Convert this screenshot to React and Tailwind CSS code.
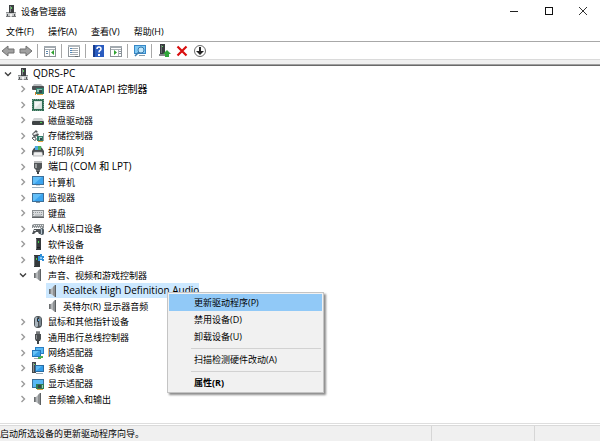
// src/App.jsx
import React, { useState } from 'react';

const Svg = ({ w = 14, h = 14, children }) => (
  <svg width={w} height={h} viewBox={`0 0 ${w} ${h}`} className="block shrink-0" aria-hidden="true">
    {children}
  </svg>
);

/* ---------- Device icons ---------- */

const PcIcon = () => (
  <Svg>
    <rect x="5" y="1" width="5" height="8" fill="#3d4042" />
    <rect x="6" y="2" width="1" height="6" fill="#85898b" />
    <rect x="7" y="3" width="1" height="2" fill="#5fd35f" />
    <path d="M2 8h3v1h5V8h2v5H2z" fill="#c9cbcc" />
    <rect x="2" y="8" width="3" height="1" fill="#8b8e90" />
    <rect x="10" y="8" width="2" height="1" fill="#8b8e90" />
    <rect x="2" y="12" width="4" height="1" fill="#77797b" />
    <rect x="8" y="12" width="4" height="1" fill="#77797b" />
    <rect x="3" y="10" width="1" height="2" fill="#55585a" />
    <rect x="10" y="10" width="1" height="2" fill="#55585a" />
    <rect x="6" y="10" width="2" height="2" fill="#f4f4f4" />
  </Svg>
);

const IdeIcon = () => (
  <Svg>
    <path d="M1 5l2-3h7l3 3z" fill="#b9bdbf" />
    <rect x="1" y="4" width="12" height="4" rx="1" fill="#4c5153" />
    <path d="M5 6h8v6H5z" fill="#2f7d6a" />
    <rect x="6" y="7" width="5" height="3" fill="#8fc2b3" />
    <rect x="8" y="8" width="3" height="3" fill="#33474a" />
    <path d="M6 12h6v1H6z" fill="#e0a443" />
    <rect x="4" y="10" width="1" height="3" fill="#d58a2a" />
  </Svg>
);

const CpuIcon = () => (
  <Svg>
    <rect x="1" y="1" width="12" height="12" fill="#2f6b52" />
    <path d="M2 1.500h10M2 12.500h10M1.500 2v10M12.500 2v10" stroke="#6d9c86" strokeDasharray="1 1" />
    <rect x="3" y="3" width="8" height="8" fill="#d6e2dc" />
    <rect x="4" y="4" width="6" height="6" fill="#f4f6f5" />
    <path d="M10 4v6H4z" fill="#dde3e0" />
  </Svg>
);

const DiskIcon = () => (
  <Svg>
    <path d="M3 5h8l2 3H1z" fill="#d0d3d4" />
    <rect x="1" y="8" width="12" height="4" rx="1" fill="#3f4345" />
    <rect x="9" y="9" width="2" height="1" fill="#49d14f" />
  </Svg>
);

const StorageIcon = () => (
  <Svg>
    <path d="M1 5l4-4 2 2-2 1 3 1-1 2-4 1z" fill="#55595b" />
    <path d="M2 5l3-2 1 2-3 1z" fill="#f2f2f2" />
    <path d="M1 9q2-2 4 0v2q-2 1-3-1z" fill="none" stroke="#505456" />
    <path d="M6 7h7v5H6z" fill="#2f7d6a" />
    <rect x="8" y="8" width="3" height="3" fill="#a8cfc4" />
    <rect x="9" y="9" width="2" height="2" fill="#33474a" />
    <path d="M7 12h5v1H7z" fill="#e0a443" />
    <rect x="12" y="4" width="1" height="8" fill="#9a9d9f" />
  </Svg>
);

const PrinterIcon = () => (
  <Svg>
    <path d="M4 2h6l1 4H3z" fill="#4aa8e0" />
    <path d="M7 2h3l1 4H7z" fill="#4fae5b" />
    <path d="M3 4h1v2h6V4h1l2 3v4h-2V8H3v3H1V7z" fill="#4a4e50" />
    <path d="M3 8h8l1 4H2z" fill="#f0f0f0" stroke="#8f9293" strokeWidth="0.6" />
  </Svg>
);

const PortIcon = () => (
  <Svg>
    <path d="M4 1v3M6 1v3M8 1v3M10 1v3" stroke="#77797a" />
    <path d="M3 3h8v5l-2 2H5L3 8z" fill="#525658" />
    <path d="M4 4h2v4H4z" fill="#96999a" />
    <path d="M5 10h4v2H5z" fill="#6f7375" />
    <path d="M7 11v3" stroke="#3f4345" strokeWidth="2" />
  </Svg>
);

const MonitorIcon = () => (
  <Svg>
    <rect x="1" y="2" width="12" height="9" fill="#3c6f99" />
    <rect x="2" y="3" width="10" height="7" fill="#63bff8" />
    <path d="M3 10l8-7h1v7z" fill="#3ba4ef" />
    <path d="M5 11h4v1H5z" fill="#8b979f" />
  </Svg>
);

const ComputerIcon = () => (
  <Svg>
    <rect x="1" y="1" width="12" height="9" fill="#3c6f99" />
    <rect x="2" y="2" width="10" height="7" fill="#63bff8" />
    <path d="M3 9l8-7h1v7z" fill="#3ba4ef" />
    <rect x="5" y="10" width="4" height="1" fill="#c8d4dc" />
    <rect x="1" y="12" width="12" height="1" fill="#9db1bf" />
  </Svg>
);

const KeyboardIcon = () => (
  <Svg>
    <rect x="1" y="4" width="12" height="7" fill="#8b8f92" />
    <rect x="2" y="5" width="10" height="5" fill="#d9dcde" />
    <path d="M2 6.500h10M2 8.500h2M10 8.500h2" stroke="#95999c" strokeDasharray="1 1" />
    <path d="M4 9h6" stroke="#a9adb0" />
    <rect x="1" y="11" width="12" height="1" fill="#606467" />
  </Svg>
);

const HidIcon = () => (
  <Svg>
    <path d="M1 3l2-1h10v4H1z" fill="#8f9497" />
    <path d="M3 3.500h9M2 5.500h9" stroke="#e9ebec" strokeDasharray="1 1" />
    <path d="M3 7h6l1 5H8L7 10H5l-2 2H1z" fill="#4e5356" />
    <path d="M3 8h2v1H3z" fill="#dfe2e4" />
    <rect x="9" y="6" width="4" height="7" rx="2" fill="#4e5b64" />
    <rect x="10" y="7" width="1" height="5" fill="#b5c4ce" />
  </Svg>
);

const SoftDeviceIcon = () => (
  <Svg>
    <rect x="5" y="1" width="5" height="12" fill="#35393b" />
    <rect x="5" y="2" width="1" height="10" fill="#6b7072" />
    <rect x="7" y="4" width="1" height="2" fill="#45d34c" />
    <rect x="6" y="10" width="3" height="1" fill="#1d1f20" />
  </Svg>
);

const SoftComponentIcon = () => (
  <Svg>
    <rect x="3" y="2" width="6" height="12" fill="#35393b" />
    <rect x="3" y="3" width="1" height="10" fill="#6b7072" />
    <rect x="5" y="5" width="1" height="2" fill="#45d34c" />
    <path d="M7 3h2V1h2v2h2v2h-1v1h1v2h-2V7H9v1H7z" fill="#2f8fd8" />
    <rect x="9" y="4" width="2" height="2" fill="#8ccbf5" />
  </Svg>
);

const SpeakerIcon = () => (
  <Svg>
    <path d="M3 5h2v5H3z" fill="#8a8d8f" />
    <path d="M5 5l4-4v12l-4-3z" fill="#b4b7b9" />
    <path d="M7 3l2-2v12l-2-2z" fill="#8e9193" />
    <path d="M9 1h1v12H9z" fill="#5c6062" />
    <path d="M3 5h1v5H3z" fill="#6b6e70" />
  </Svg>
);

const MouseIcon = () => (
  <Svg>
    <rect x="3" y="1" width="8" height="12" rx="4" fill="#4a5054" />
    <rect x="4" y="2" width="3" height="10" rx="1.500" fill="#a8b4bd" />
    <rect x="8" y="2" width="2" height="9" rx="1" fill="#7a8790" />
    <rect x="6" y="3" width="2" height="4" rx="1" fill="#22272b" />
    <rect x="7" y="4" width="1" height="2" fill="#4da3e0" />
  </Svg>
);

const UsbIcon = () => (
  <Svg>
    <rect x="5" y="1" width="4" height="4" fill="#9b9ea0" />
    <path d="M6 2v2M8 2v2" stroke="#3f4345" strokeWidth="0.8" />
    <path d="M4 4h6v5l-1 2H5L4 9z" fill="#4b4f51" />
    <rect x="5" y="5" width="1" height="4" fill="#8b8e90" />
    <path d="M7 10v4" stroke="#3f4345" strokeWidth="2" />
  </Svg>
);

const NetworkIcon = () => (
  <Svg>
    <rect x="4" y="1" width="9" height="7" fill="#2b7fc4" />
    <rect x="5" y="2" width="7" height="5" fill="#58b8f4" />
    <rect x="1" y="4" width="9" height="7" fill="#2577ba" />
    <rect x="2" y="5" width="7" height="5" fill="#66c3f7" />
    <path d="M2 10l6-5h1v5z" fill="#379fe6" />
    <path d="M3 12h5v1H3z" fill="#9fabb2" />
    <path d="M9 10h3v2h-2v1H7v-2h2z" fill="#4caf50" />
  </Svg>
);

const SystemIcon = () => (
  <Svg>
    <rect x="1" y="1" width="4" height="11" fill="#44494c" />
    <rect x="2" y="2" width="1" height="9" fill="#8d9194" />
    <rect x="3" y="3" width="1" height="1" fill="#5fe065" />
    <rect x="4" y="4" width="9" height="7" fill="#2b6ba0" />
    <rect x="5" y="5" width="7" height="5" fill="#5cbaf5" />
    <path d="M5 10l6-5h1v5z" fill="#329dea" />
    <rect x="5" y="12" width="7" height="1" fill="#97a6b0" />
  </Svg>
);

const DisplayIcon = () => (
  <Svg>
    <rect x="1" y="2" width="12" height="9" fill="#3c6f99" />
    <rect x="2" y="3" width="10" height="7" fill="#58b8f4" />
    <rect x="5" y="7" width="8" height="5" fill="#2f7d55" />
    <rect x="7" y="8" width="3" height="3" fill="#3b4447" />
    <rect x="11" y="8" width="1" height="3" fill="#9ad0b4" />
    <path d="M6 12h6v1H6z" fill="#e0a443" />
  </Svg>
);

/* ---------- Toolbar icons ---------- */

const ArrowIcon = ({ flip }) => (
  <Svg>
    <path
      d="M1 7l6-5v3h6v4H7v3z"
      fill="#a0a0a0"
      stroke="#707070"
      transform={flip ? 'rotate(180 7 7)' : undefined}
    />
  </Svg>
);

const TreePanelIcon = () => (
  <Svg>
    <rect x="1.500" y="2.500" width="11" height="10" fill="#fff" stroke="#8b9197" />
    <rect x="1" y="2" width="12" height="2" fill="#a3aab0" />
    <path d="M2 5.500h10M6.500 6v6" stroke="#a9b0b6" />
    <path d="M3 7.500h2M3 9.500h2" stroke="#5e87ad" />
    <path d="M11 6v5L8 8.500z" fill="#2fa12f" />
  </Svg>
);

const PropertiesIcon = () => (
  <Svg>
    <rect x="1.500" y="1.500" width="11" height="11" fill="#fff" stroke="#8f959a" />
    <rect x="1" y="1" width="12" height="2" fill="#b3b8bc" />
    <path d="M3 4.500h8M3 6.500h8M3 8.500h8M3 10.500h8" stroke="#a5abb0" />
    <path d="M3 4.500h2M3 6.500h2M3 8.500h2" stroke="#4e86ba" />
    <path d="M8 12.500h3" stroke="#5f666b" />
  </Svg>
);

const HelpIcon = () => (
  <Svg>
    <rect x="2" y="1" width="11" height="12" fill="#2a5cc0" />
    <rect x="2" y="1" width="2" height="12" fill="#173c8e" />
    <path d="M6 5q0-2 2-2t2 2q0 1-1 1.500T8 8.500" fill="none" stroke="#fff" strokeWidth="1.500" />
    <rect x="7" y="10" width="2" height="2" fill="#fff" />
  </Svg>
);

const ActionPanelIcon = () => (
  <Svg>
    <rect x="1.500" y="2.500" width="11" height="10" fill="#fff" stroke="#8b9197" />
    <rect x="1" y="2" width="12" height="2" fill="#a3aab0" />
    <path d="M2 5.500h10M9.500 6v6" stroke="#a9b0b6" />
    <path d="M10 7.500h2M10 9.500h2" stroke="#85929c" />
    <path d="M5 6v5l3-2.500z" fill="#2fa12f" />
  </Svg>
);

const ScanIcon = () => (
  <Svg>
    <rect x="1" y="1" width="12" height="9" fill="#3787c6" />
    <rect x="2" y="2" width="10" height="7" fill="#7fc8f4" />
    <path d="M6 11h6v1H6z" fill="#8b9ba6" />
    <circle cx="8" cy="6" r="3" fill="#c2e7fb" stroke="#3b7cae" />
    <path d="M6 8l-4 4" stroke="#3f7eae" strokeWidth="1.600" />
  </Svg>
);

const UpdateIcon = () => (
  <Svg>
    <rect x="3" y="0" width="5" height="10" fill="#3a3e40" />
    <rect x="4" y="1" width="1" height="8" fill="#6b7072" />
    <rect x="5" y="2" width="1" height="1" fill="#5fe065" />
    <path d="M2 10h7v2H2z" fill="#85898b" />
    <path d="M10 6l4 4h-2v3H8v-3H6z" fill="#31a63a" />
  </Svg>
);

const UninstallIcon = () => (
  <Svg>
    <path d="M2.500 2.500l9 9M11.500 2.500l-9 9" stroke="#d90f0f" strokeWidth="2.200" />
  </Svg>
);

const DisableIcon = () => (
  <Svg>
    <circle cx="7" cy="7" r="5.500" fill="#fff" stroke="#6b6b6b" />
    <path d="M6 3h2v4h3l-4 4-4-4h3z" fill="#222" />
  </Svg>
);

const Chevron = ({ open }) => (
  <Svg w={8} h={8}>
    {open ? (
      <path d="M1 2.500l3 3 3-3" fill="none" stroke="#404040" strokeWidth="1.400" />
    ) : (
      <path d="M2.500 1l3 3-3 3" fill="none" stroke="#9a9a9a" strokeWidth="1.400" />
    )}
  </Svg>
);

/* ---------- Data ---------- */

const menus = ['文件(F)', '操作(A)', '查看(V)', '帮助(H)'];

const toolbar = [
  [
    { label: '后退', icon: <ArrowIcon /> },
    { label: '前进', icon: <ArrowIcon flip /> },
  ],
  [{ label: '显示/隐藏控制台树', icon: <TreePanelIcon /> }],
  [{ label: '属性', icon: <PropertiesIcon /> }],
  [
    { label: '帮助', icon: <HelpIcon /> },
    { label: '显示/隐藏操作窗格', icon: <ActionPanelIcon /> },
  ],
  [{ label: '扫描检测硬件改动', icon: <ScanIcon /> }],
  [
    { label: '更新驱动程序', icon: <UpdateIcon /> },
    { label: '卸载设备', icon: <UninstallIcon /> },
    { label: '禁用设备', icon: <DisableIcon /> },
  ],
];

// latin: names that are mostly Latin letters are set one size up
const devices = [
  { name: 'QDRS-PC', level: 0, icon: PcIcon, open: true, latin: true },
  { name: 'IDE ATA/ATAPI 控制器', level: 1, icon: IdeIcon, latin: true },
  { name: '处理器', level: 1, icon: CpuIcon },
  { name: '磁盘驱动器', level: 1, icon: DiskIcon },
  { name: '存储控制器', level: 1, icon: StorageIcon },
  { name: '打印队列', level: 1, icon: PrinterIcon },
  { name: '端口 (COM 和 LPT)', level: 1, icon: PortIcon, latin: true },
  { name: '计算机', level: 1, icon: ComputerIcon },
  { name: '监视器', level: 1, icon: MonitorIcon },
  { name: '键盘', level: 1, icon: KeyboardIcon },
  { name: '人机接口设备', level: 1, icon: HidIcon },
  { name: '软件设备', level: 1, icon: SoftDeviceIcon },
  { name: '软件组件', level: 1, icon: SoftComponentIcon },
  { name: '声音、视频和游戏控制器', level: 1, icon: SpeakerIcon, open: true },
  { name: 'Realtek High Definition Audio', level: 2, icon: SpeakerIcon, latin: true },
  { name: '英特尔(R) 显示器音频', level: 2, icon: SpeakerIcon },
  { name: '鼠标和其他指针设备', level: 1, icon: MouseIcon },
  { name: '通用串行总线控制器', level: 1, icon: UsbIcon },
  { name: '网络适配器', level: 1, icon: NetworkIcon },
  { name: '系统设备', level: 1, icon: SystemIcon },
  { name: '显示适配器', level: 1, icon: DisplayIcon },
  { name: '音频输入和输出', level: 1, icon: SpeakerIcon },
];

const indent = ['pl-0', 'pl-[15px]', 'pl-[30px]'];

const contextGroups = [
  ['更新驱动程序(P)', '禁用设备(D)', '卸载设备(U)'],
  ['扫描检测硬件改动(A)'],
  ['属性(R)'],
];

/* ---------- Parts ---------- */

const TitleBar = () => (
  <header className="flex h-[22px] items-center">
    <div className="flex flex-1 items-center gap-[3px] pl-1">
      <PcIcon />
      <h1>设备管理器</h1>
    </div>
    <div className="flex">
      <button aria-label="最小化" className="flex h-[22px] w-[35px] items-center justify-center">
        <Svg w={10} h={10}>
          <path d="M1 5.500h8" stroke="#222" />
        </Svg>
      </button>
      <button aria-label="最大化" className="flex h-[22px] w-[35px] items-center justify-center">
        <Svg w={10} h={10}>
          <rect x="1.500" y="1.500" width="7" height="7" fill="none" stroke="#111" />
        </Svg>
      </button>
      <button aria-label="关闭" className="flex h-[22px] w-[34px] items-center justify-center">
        <Svg w={10} h={10}>
          <path d="M1 1l8 8M9 1l-8 8" stroke="#333" />
        </Svg>
      </button>
    </div>
  </header>
);

const DeviceRow = ({ device, selected, onSelect }) => {
  const Icon = device.icon;
  return (
    <li
      role="treeitem"
      aria-level={device.level + 1}
      aria-selected={selected}
      className={`flex items-center odd:h-[15px] even:h-4 ${indent[device.level]}`}
    >
      {device.level < 2 ? (
        <button aria-label={device.name} className="flex w-4 justify-center">
          <Chevron open={device.open} />
        </button>
      ) : (
        <span className="w-4" />
      )}
      <button
        onClick={onSelect}
        className={`flex h-full items-center gap-[3px] whitespace-nowrap ${device.latin ? 'text-[10px]' : ''} ${
          selected ? 'bg-[#cce8ff]' : ''
        }`}
      >
        <Icon />
        {device.name}
      </button>
    </li>
  );
};

const ContextMenu = () => (
  <div
    role="menu"
    className="absolute top-[226px] left-[167px] w-[157px] border border-[#c4c4c4] bg-[#f1f1f1] p-px shadow-[2px_2px_2px_rgba(0,0,0,0.45)]"
  >
    {contextGroups.map((group, g) => (
      <React.Fragment key={group[0]}>
        {g > 0 && <hr className="mt-[3px] mr-px mb-[2px] ml-[22px] border-t border-[#d2d2d2]" />}
        {group.map((label, i) => (
          <button
            key={label}
            role="menuitem"
            className={`flex h-[17px] w-full items-center pl-[25px] whitespace-nowrap ${
              g === 0 && i === 0 ? 'bg-[#91c9f7]' : ''
            } ${g === 2 ? 'font-bold' : ''}`}
          >
            {label}
          </button>
        ))}
      </React.Fragment>
    ))}
  </div>
);

const App = () => {
  const [selected, setSelected] = useState('Realtek High Definition Audio');

  return (
    <div className="flex min-h-screen flex-col bg-white font-['Open_Sans','Noto_Sans_CJK_SC',sans-serif] text-[9px] leading-[15px] text-black">
      <TitleBar />

      <nav className="flex h-[19px] items-center gap-[14px] pl-[6px]">
        {menus.map((menu) => (
          <button key={menu}>{menu}</button>
        ))}
      </nav>

      <div role="toolbar" className="flex h-[18px] items-center border-t border-[#a8a8a8] pl-px">
        {toolbar.map((group, g) => (
          <div
            key={g}
            className={`flex items-center gap-1 ${g > 0 ? 'ml-1 border-l border-[#a8a8a8] pl-[5px]' : ''}`}
          >
            {group.map((item) => (
              <button key={item.label} aria-label={item.label}>
                {item.icon}
              </button>
            ))}
          </div>
        ))}
      </div>
      <div className="h-[6px] border-t border-b border-t-[#dadada] border-b-[#a0a0a0] bg-[#f0f0f0]" />

      <main className="relative flex-1 border-t border-[#696969]">
        <ul role="tree">
          {devices.map((device) => (
            <DeviceRow
              key={device.name}
              device={device}
              selected={selected === device.name}
              onSelect={() => setSelected(device.name)}
            />
          ))}
        </ul>
        <ContextMenu />
      </main>

      <footer className="border-t border-[#dedede] pt-px">
        <div className="flex h-4 border-t border-[#dadada] bg-[#f0f0f0]">
          <p className="flex-1">启动所选设备的更新驱动程序向导。</p>
          <span className="w-[103px] border-l border-[#d6d6d6]" />
          <span className="w-[66px] border-l border-[#d6d6d6]" />
        </div>
      </footer>
    </div>
  );
};

export default App;
